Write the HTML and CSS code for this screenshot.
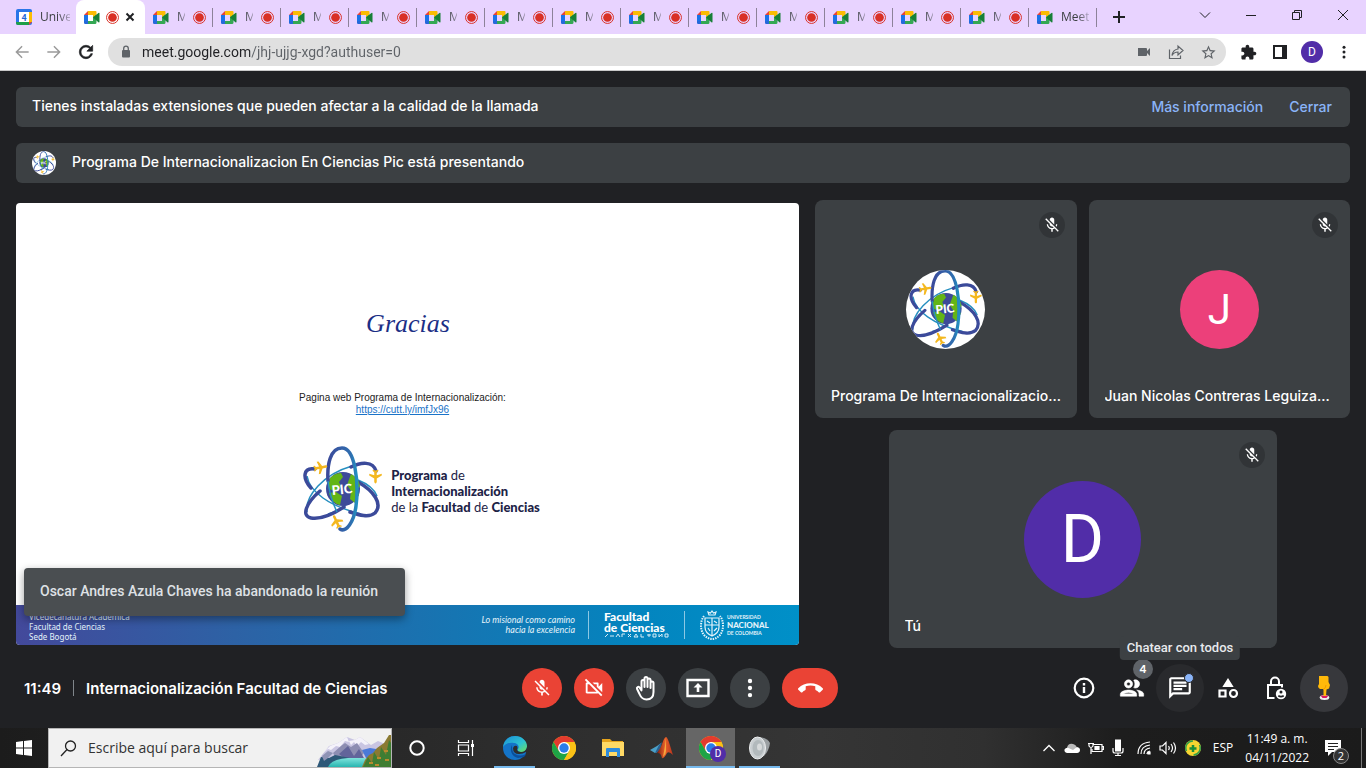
FILE: index.html
```html
<!DOCTYPE html>
<html lang="es">
<head>
<meta charset="utf-8">
<meta name="viewport" content="width=device-width, initial-scale=1">
<title>Meet: Internacionalización Facultad de Ciencias</title>
<link rel="stylesheet" href="styles.css">
</head>
<body>
<svg class="sprite" aria-hidden="true">
  <defs>
    <linearGradient id="orbit-v" x1="0" y1="0" x2="1" y2="0"><stop offset="0" stop-color="#3b4a9a"/><stop offset=".8" stop-color="#2f6fb0"/><stop offset="1" stop-color="#2390c0"/></linearGradient>
    <linearGradient id="edge-a" x1="0" y1="0" x2="1" y2="1"><stop offset="0" stop-color="#1b8fd8"/><stop offset=".6" stop-color="#2ec3d0"/><stop offset="1" stop-color="#6fe05a"/></linearGradient>
    <linearGradient id="water" x1="0" y1="0" x2="0" y2="1"><stop offset="0" stop-color="#7fe3dc"/><stop offset="1" stop-color="#28b5b0"/></linearGradient>
    <linearGradient id="matlab-r" x1="0" y1="0" x2="1" y2="0"><stop offset="0" stop-color="#7a1c10"/><stop offset=".5" stop-color="#e8622a"/><stop offset="1" stop-color="#b8321c"/></linearGradient>
  </defs>
  <symbol id="meet" viewBox="0 0 16 16"><path fill="#1a73e8" d="M0 6h4v6H0z"/><path fill="#ea4335" d="M0 6l4-4v4z"/><path fill="#fbbc04" d="M4 2h7.500q1 0 1 1v4.500L9 8.500V6H4z"/><path fill="#2668d9" d="M0 12h4v3H1.200Q0 15 0 13.700z"/><path fill="#34a853" d="M4 12h5V8l3.500-2.500V13.500q0 1.500-1.500 1.500H4z"/><path fill="#188038" d="M9 8.500l5.400-4.600q1.100-.7 1.100.5v8.300q0 1.200-1.100.5z"/></symbol>
  <symbol id="rec" viewBox="0 0 12 12"><circle cx="6" cy="6" r="5.500" fill="none" stroke="#d93025" stroke-width=".9"/><circle cx="6" cy="6" r="4" fill="#d93025"/></symbol>
  <symbol id="mic-off" viewBox="0 0 24 24"><path d="M19 11h-1.700c0 .74-.16 1.430-.43 2.050l1.230 1.230c.56-.98.9-2.090.9-3.280zm-4.020.17c0-.06.02-.11.02-.17V5c0-1.660-1.340-3-3-3S9 3.340 9 5v.18l5.980 5.990zM4.270 3L3 4.270l6.010 6.010V11c0 1.660 1.330 3 2.990 3 .22 0 .44-.03.65-.08l1.660 1.660c-.71.33-1.500.52-2.310.52-2.760 0-5.300-2.100-5.300-5.100H5c0 3.410 2.720 6.230 6 6.720V21h2v-3.280c.91-.13 1.770-.45 2.540-.9L19.730 21 21 19.730 4.270 3z"/></symbol>
  <symbol id="dots" viewBox="0 0 24 24"><circle cx="12" cy="5.500" r="2"/><circle cx="12" cy="12" r="2"/><circle cx="12" cy="18.500" r="2"/></symbol>
  <symbol id="plane" viewBox="0 0 24 24"><path fill="#f4b81f" d="M22 16.500v-3l-8-4.500V3.500C14 2.500 13 1 12 1s-2 1.500-2 2.500V9l-8 4.500v3l8-2.500V19l-2.500 2v2l4.500-1.300L16.500 23v-2L14 19v-5z"/></symbol>
  <symbol id="pic-logo" viewBox="0 0 80 87">
    <g fill="none">
      <path stroke="#258fc0" stroke-width="1.500" d="M49 20Q28 26 15 40T4 66M4 30Q6 42 20 52T58 68M74 50Q70 40 55 34M25 68Q35 66 45 57"/>
      <path stroke="#3b4a9a" stroke-width="3.500" stroke-linecap="round" d="M12 23C0 21-1 32 8 42M55 36C71 45 80 58 72 67 66 72 56 69 47 66M73 25C70 15 58 16 48 21M17 45C3 57-2 70 8 72 18 74 30 68 41 61"/>
    </g>
    <circle cx="40" cy="43" r="17" fill="#3d4a99"/>
    <path fill="#63b516" d="M25 35q5-8 13-8l2 4-4 5 2 5-7 4-5-2zM26 47l7-1 6 4-2 9q-9-2-11-12zM48 28q8 4 9 12l-4 5 3 3-4 9-5-4 1-8-4-6z"/>
    <text x="39" y="48" text-anchor="middle" transform="rotate(-6 39 44)" class="pic-word">PIC</text>
    <path fill="none" stroke="url(#orbit-v)" stroke-width="3.500" stroke-linecap="round" d="M37 83C43 87 51 76 53 60 56 36 52 2 39 2 27 2 24 19 25 35"/>
    <path fill="none" stroke="#258fc0" stroke-width="1.500" d="M25 35q2 17 9 31"/>
    <use href="#plane" x="10" y="14" width="15" height="15" transform="rotate(80 17.500 21.500)"/>
    <use href="#plane" x="65" y="23" width="15" height="15" transform="rotate(180 72.500 30.500)"/>
    <use href="#plane" x="26" y="68" width="15" height="15" transform="rotate(-25 33.500 75.500)"/>
  </symbol>
  <symbol id="chrome-logo" viewBox="0 0 24 24"><circle cx="12" cy="12" r="12" fill="#fbc116"/><path fill="#e33b2e" d="M1.600 6A12 12 0 0 1 22.400 6H12L6.800 15z"/><path fill="#1ea446" d="M1.600 6A12 12 0 0 0 12 24l5.200-9H6.800z"/><path fill="#fbc116" d="M12 24A12 12 0 0 0 22.400 6H12l5.200 9z"/><circle cx="12" cy="12" r="6" fill="#fff"/><circle cx="12" cy="12" r="4.700" fill="#2a7de9"/></symbol>
</svg>

<header class="tabstrip">
  <nav class="tabs" aria-label="Pestañas">
    <a class="tab tab-first" href="#"><svg class="fav" viewBox="0 0 16 16"><rect width="16" height="16" rx="2" fill="#2a75e8"/><path fill="#fbbc04" d="M13 3h3v10h-3z"/><path fill="#1e9e48" d="M0 13h13v3H2q-2 0-2-2z"/><path fill="#ea4335" d="M13 13h3l-3 3z"/><path fill="#fff" d="M3 3h10v10H3z"/><text x="8" y="11.500" text-anchor="middle" class="cal-num">4</text></svg><span class="tab-title">Universidad</span></a>
    <div class="tab active"><svg class="fav"><use href="#meet"/></svg><svg class="rec"><use href="#rec"/></svg><button class="tab-close" aria-label="Cerrar pestaña"><svg width="10" height="10" viewBox="0 0 10 10"><path d="M1.500 1.500l7 7m0-7l-7 7" stroke="#202124" stroke-width="2"/></svg></button></div>
    <a class="tab" href="#"><svg class="fav"><use href="#meet"/></svg><span class="tab-title">Meet</span><svg class="rec"><use href="#rec"/></svg></a>
    <a class="tab" href="#"><svg class="fav"><use href="#meet"/></svg><span class="tab-title">Meet</span><svg class="rec"><use href="#rec"/></svg></a>
    <a class="tab" href="#"><svg class="fav"><use href="#meet"/></svg><span class="tab-title">Meet</span><svg class="rec"><use href="#rec"/></svg></a>
    <a class="tab" href="#"><svg class="fav"><use href="#meet"/></svg><span class="tab-title">Meet</span><svg class="rec"><use href="#rec"/></svg></a>
    <a class="tab" href="#"><svg class="fav"><use href="#meet"/></svg><span class="tab-title">Meet</span><svg class="rec"><use href="#rec"/></svg></a>
    <a class="tab" href="#"><svg class="fav"><use href="#meet"/></svg><span class="tab-title">Meet</span><svg class="rec"><use href="#rec"/></svg></a>
    <a class="tab" href="#"><svg class="fav"><use href="#meet"/></svg><span class="tab-title">Meet</span><svg class="rec"><use href="#rec"/></svg></a>
    <a class="tab" href="#"><svg class="fav"><use href="#meet"/></svg><span class="tab-title">Meet</span><svg class="rec"><use href="#rec"/></svg></a>
    <a class="tab" href="#"><svg class="fav"><use href="#meet"/></svg><span class="tab-title">Meet</span><svg class="rec"><use href="#rec"/></svg></a>
    <a class="tab" href="#"><svg class="fav"><use href="#meet"/></svg><span class="tab-title">Meet</span><svg class="rec"><use href="#rec"/></svg></a>
    <a class="tab" href="#"><svg class="fav"><use href="#meet"/></svg><span class="tab-title">Meet</span><svg class="rec"><use href="#rec"/></svg></a>
    <a class="tab" href="#"><svg class="fav"><use href="#meet"/></svg><span class="tab-title">Meet</span><svg class="rec"><use href="#rec"/></svg></a>
    <a class="tab" href="#"><svg class="fav"><use href="#meet"/></svg><span class="tab-title">Meet</span><svg class="rec"><use href="#rec"/></svg></a>
    <a class="tab" href="#"><svg class="fav"><use href="#meet"/></svg><span class="tab-title">Meet</span></a>
  </nav>
  <button class="new-tab" aria-label="Nueva pestaña"><svg width="12" height="12" viewBox="0 0 12 12"><path d="M6 0v12M0 6h12" stroke="#202124" stroke-width="2"/></svg></button>
  <div class="window-controls">
    <button aria-label="Buscar pestañas"><svg width="12" height="12" viewBox="0 0 12 12"><path d="M1 3.500l5 5 5-5"/></svg></button>
    <button aria-label="Minimizar"><svg width="12" height="12" viewBox="0 0 12 12"><path d="M1 6.500h10"/></svg></button>
    <button aria-label="Restaurar"><svg width="12" height="12" viewBox="0 0 12 12"><path d="M1.500 3.500h7v7h-7zM3.500 3.500v-2h7v7h-2"/></svg></button>
    <button aria-label="Cerrar"><svg width="12" height="12" viewBox="0 0 12 12"><path d="M1 1l10 10m0-10L1 11"/></svg></button>
  </div>
</header>

<div class="toolbar">
  <button class="tool faded" aria-label="Atrás"><svg width="20" height="20" viewBox="0 0 24 24"><path d="M20 11H7.400l5.300-5.300L11.500 4.500 4 12l7.500 7.500 1.200-1.200L7.400 13H20z"/></svg></button>
  <button class="tool faded" aria-label="Adelante"><svg width="20" height="20" viewBox="0 0 24 24"><path d="M4 11h12.600l-5.300-5.300 1.200-1.200L20 12l-7.500 7.500-1.200-1.200 5.300-5.300H4z"/></svg></button>
  <button class="tool" aria-label="Recargar"><svg width="20" height="20" viewBox="0 0 24 24"><path stroke="#202124" stroke-width=".8" d="M17.650 6.350C16.200 4.900 14.210 4 12 4c-4.420 0-7.990 3.580-7.990 8s3.570 8 7.990 8c3.730 0 6.840-2.550 7.730-6h-2.080c-.82 2.330-3.040 4-5.650 4-3.310 0-6-2.690-6-6s2.690-6 6-6c1.660 0 3.140.69 4.220 1.780L13 11h7V4l-2.350 2.350z"/></svg></button>
  <form class="omnibox">
    <svg width="12" height="14" viewBox="0 0 12 14" fill="#5f6368"><path d="M3 5h6q1 0 1 1v5.500q0 1-1 1H3q-1 0-1-1V6q0-1 1-1z"/><path d="M3.700 5.500V3.500a2.300 2.300 0 0 1 4.600 0v2" fill="none" stroke="#5f6368" stroke-width="1.300"/></svg>
    <input class="url" type="text" aria-label="Dirección" value="meet.google.com/jhj-ujjg-xgd?authuser=0">
    <button type="button" class="tool grey" aria-label="Cámara"><svg width="14" height="12" viewBox="0 0 14 12"><path d="M1 2h8q1 0 1 1v2l3-3v8l-3-3v2q0 1-1 1H1z"/></svg></button>
    <button type="button" class="tool grey" aria-label="Compartir"><svg width="16" height="16" viewBox="0 0 16 16" fill="none" stroke="#5f6368"><path stroke-width="1.200" d="M1.500 5.500v9h11v-3M4 11.500q1-6 6-6.500V2l5 4.500-5 4.500V8Q6 8 4 11.500z"/></svg></button>
    <button type="button" class="tool grey" aria-label="Favorito"><svg width="17" height="17" viewBox="0 0 24 24"><path d="M22 9.240l-7.190-.62L12 2 9.190 8.630 2 9.240l5.460 4.730L5.820 21 12 17.270 18.180 21l-1.630-7.030L22 9.240zM12 15.400l-3.760 2.270 1-4.280-3.320-2.880 4.380-.38L12 6.100l1.710 4.040 4.380.38-3.320 2.880 1 4.280L12 15.400z"/></svg></button>
  </form>
  <button class="tool" aria-label="Extensiones"><svg width="17" height="17" viewBox="0 0 24 24"><path d="M20.500 11H19V7c0-1.100-.9-2-2-2h-4V3.500C13 2.120 11.880 1 10.500 1S8 2.120 8 3.500V5H4c-1.100 0-1.990.9-1.990 2v3.800H3.500c1.490 0 2.700 1.210 2.700 2.700s-1.210 2.700-2.700 2.700H2V20c0 1.100.9 2 2 2h3.800v-1.500c0-1.490 1.210-2.700 2.700-2.700 1.490 0 2.700 1.210 2.700 2.700V22H17c1.100 0 2-.9 2-2v-4h1.500c1.380 0 2.500-1.120 2.500-2.500S21.880 11 20.500 11z"/></svg></button>
  <button class="tool" aria-label="Panel lateral"><svg width="14" height="14" viewBox="0 0 14 14"><path fill-rule="evenodd" d="M0 0h14v14H0zM2 2v10h7V2z"/></svg></button>
  <button class="tool" aria-label="Perfil"><span class="profile">D</span></button>
  <button class="tool" aria-label="Menú"><svg width="18" height="18" viewBox="0 0 24 24"><use href="#dots"/></svg></button>
</div>

<main class="meet">
  <section class="notice">
    <span class="notice-text">Tienes instaladas extensiones que pueden afectar a la calidad de la llamada</span>
    <a href="#">Más información</a>
    <a href="#">Cerrar</a>
  </section>
  <section class="notice">
    <span class="presenter"><svg width="22" height="24"><use href="#pic-logo"/></svg></span>
    <span class="notice-text">Programa De Internacionalizacion En Ciencias Pic está presentando</span>
  </section>

  <div class="stage">
    <article class="slide">
      <div class="slide-body">
        <h1>Gracias</h1>
        <p class="slide-web">Pagina web Programa de Internacionalización:<br><a href="#">https://cutt.ly/imfJx96</a></p>
        <div class="brand">
          <svg width="80" height="87"><use href="#pic-logo"/></svg>
          <p><b>Programa</b> de<br><b>Internacionalización</b><br>de la <b>Facultad</b> de <b>Ciencias</b></p>
        </div>
      </div>
      <footer class="slide-foot">
        <p class="office">Vicedecanatura Académica<br>Facultad de Ciencias<br>Sede Bogotá</p>
        <p class="motto">Lo misional como camino<br>hacia la excelencia</p>
        <div class="faculty"><b>Facultad<br>de Ciencias</b><svg viewBox="0 0 66 5" width="66" height="5" fill="none" stroke="#d5ecf7"><path d="M1 4l3-3M6 3h4M12 4l2-3 2 3M18 4V1h3M24 1l3 3m0-3l-3 3M30 4l2-3 2 3zM37 1v3h3M43 2h4M45 1v3M49 1h3v3h-3zM55 1v3l3-3v3M61 1h3v3h-3z"/></svg></div>
        <div class="university">
          <svg width="24" height="30" viewBox="0 0 24 30" fill="none" stroke="#e4f3fa" stroke-width="1.200"><path d="M9 5l-1-3 2.500 1L12 1l1.500 2L16 2l-1 3zM5 8h14v9q0 6-7 9-7-3-7-9zM5 15h14M12 8v18M7 11l3 2M14 11l3 2M8 18l2 3M14 21l3-3"/><path stroke-dasharray="1.500 1" stroke-width="2" d="M4 6C0 11 0 20 4 25q4 4 8 4t8-4c4-5 4-14 0-19"/></svg>
          <p><span>UNIVERSIDAD</span><b>NACIONAL</b><span>DE COLOMBIA</span></p>
        </div>
      </footer>
      <div class="toast" role="status">Oscar Andres Azula Chaves ha abandonado la reunión</div>
    </article>

    <section class="tiles">
      <article class="tile">
        <span class="muted"><svg width="18" height="18"><use href="#mic-off"/></svg></span>
        <span class="avatar logo"><svg width="74" height="80"><use href="#pic-logo"/></svg></span>
        <span class="name">Programa De Internacionalizacion En Ciencias Pic</span>
      </article>
      <article class="tile">
        <span class="muted"><svg width="18" height="18"><use href="#mic-off"/></svg></span>
        <span class="avatar pink">J</span>
        <span class="name">Juan Nicolas Contreras Leguizamon</span>
      </article>
      <article class="tile wide">
        <span class="muted"><svg width="18" height="18"><use href="#mic-off"/></svg></span>
        <span class="avatar purple">D</span>
        <span class="name">Tú</span>
      </article>
    </section>
  </div>

  <footer class="controls">
    <div class="meeting"><time>11:49</time><span class="rule"></span><span>Internacionalización Facultad de Ciencias</span></div>
    <div class="call">
      <button class="round red" aria-label="Activar micrófono"><svg width="20" height="20"><use href="#mic-off"/></svg></button>
      <button class="round red" aria-label="Activar cámara"><svg width="22" height="22" viewBox="0 0 24 24"><path d="M9.560 8l-2-2-4.150-4.140L2 3.270 4.730 6H4c-.55 0-1 .45-1 1v10c0 .55.45 1 1 1h12c.21 0 .39-.08.55-.18L19.730 21l1.410-1.410-8.860-8.860L9.560 8zM5 16V8h1.730l8 8H5zm10-8v2.610l6 6V6.500l-4 4V7c0-.55-.45-1-1-1h-5.610l2 2H15z"/></svg></button>
      <button class="round" aria-label="Levantar la mano"><svg width="24" height="26" viewBox="0 0 24 26" fill="none" stroke="#fff" stroke-width="2" stroke-linecap="round" stroke-linejoin="round"><path d="M7.500 15V6.500a1.500 1.500 0 0 1 3 0V12M10.500 12V3.500a1.500 1.500 0 0 1 3 0V12M13.500 12V5a1.500 1.500 0 0 1 3 0v8M16.500 13V8a1.500 1.500 0 0 1 3 0v9c0 5-3 7.500-7 7.500-4.500 0-6-3-7-5.500L3 13.800c-.6-1.600 1.400-2.700 2.500-1.300l2 3"/></svg></button>
      <button class="round" aria-label="Presentar ahora"><svg width="24" height="20" viewBox="0 0 24 20"><path d="M1.500 2h21v16h-21z" fill="none" stroke="#fff" stroke-width="2.400"/><path d="M12 5l4.500 4.500H13.300V14h-2.600V9.500H7.500z"/></svg></button>
      <button class="round" aria-label="Más opciones"><svg width="26" height="26"><use href="#dots"/></svg></button>
      <button class="round red hangup" aria-label="Abandonar la llamada"><svg width="25" height="25" viewBox="0 0 24 24"><path d="M12 9c-1.600 0-3.150.25-4.600.72v3.100c0 .39-.23.74-.56.9-.98.49-1.870 1.120-2.660 1.850-.18.18-.43.28-.7.28-.28 0-.53-.11-.71-.29L.29 13.080c-.18-.17-.29-.42-.29-.7 0-.28.11-.53.29-.71C3.340 8.780 7.460 7 12 7s8.660 1.780 11.710 4.670c.18.18.29.43.29.71 0 .28-.11.53-.29.71l-2.480 2.480c-.18.18-.43.29-.71.29-.27 0-.52-.11-.7-.28-.79-.74-1.690-1.360-2.670-1.850-.33-.16-.56-.5-.56-.9v-3.100C15.150 9.250 13.600 9 12 9z"/></svg></button>
    </div>
    <div class="panels">
      <button aria-label="Detalles de la reunión"><svg width="24" height="24" viewBox="0 0 24 24"><circle cx="12" cy="12" r="9.300" fill="none" stroke="#fff" stroke-width="2.200"/><path d="M10.800 7h2.400v2.400h-2.400zM10.800 11h2.400v6h-2.400z"/></svg></button>
      <button aria-label="Mostrar a todos"><svg width="28" height="28" viewBox="0 0 24 24"><path stroke="#fff" stroke-width=".5" d="M9 13.750c-2.340 0-7 1.170-7 3.500V19h14v-1.750c0-2.330-4.660-3.500-7-3.500zM4.340 17c.84-.58 2.870-1.250 4.660-1.250s3.820.67 4.660 1.250H4.340zM9 12c1.930 0 3.500-1.570 3.500-3.500S10.930 5 9 5 5.500 6.570 5.500 8.500 7.070 12 9 12zm0-5c.83 0 1.500.67 1.500 1.500S9.830 10 9 10s-1.500-.67-1.500-1.500S8.170 7 9 7zm7.040 6.810c1.160.84 1.960 1.960 1.960 3.440V19h4v-1.750c0-2.020-3.500-3.170-5.960-3.440zM15 12c1.930 0 3.500-1.570 3.500-3.500S16.930 5 15 5c-.54 0-1.040.13-1.500.35.63.89 1 1.980 1 3.150s-.37 2.260-1 3.150c.46.22.96.35 1.500.35z"/></svg><span class="count">4</span></button>
      <button class="hovered" aria-label="Chatear con todos"><svg width="26" height="26" viewBox="0 0 24 24"><path d="M4 4h16v12H5.170L4 17.170V4m0-2c-1.100 0-1.990.9-1.990 2L2 22l4-4h14c1.100 0 2-.9 2-2V4c0-1.100-.9-2-2-2H4zm2 10h8v2H6v-2zm0-3h12v2H6V9zm0-3h12v2H6V6z"/></svg><span class="unread"></span><span class="tooltip" role="tooltip">Chatear con todos</span></button>
      <button aria-label="Actividades"><svg width="24" height="24" viewBox="0 0 24 24" fill="none" stroke="#fff" stroke-width="2.200"><path d="M12 4L8.300 10h7.400z" fill="#fff"/><path d="M3.500 14.500h6v6h-6z"/><circle cx="17.500" cy="17.500" r="3.500"/></svg></button>
      <button aria-label="Controles del organizador"><svg width="24" height="26" viewBox="0 0 24 26" fill="none" stroke="#fff" stroke-width="2"><path d="M10.500 23H4V10h14v2.500M7 10V6.500a4 4 0 0 1 8 0V10"/><circle cx="17" cy="19" r="5.200" fill="#fff" stroke="none"/><circle cx="17" cy="17" r="1.500" fill="#202124" stroke="none"/><path stroke="#202124" stroke-width="1.800" d="M14.300 20.800q2.700 1.500 5.400 0"/></svg></button>
      <button class="pointer" aria-label="Puntero"><svg width="24" height="28" viewBox="0 0 24 28"><ellipse cx="12.500" cy="23.500" rx="4.800" ry="2.500" fill="#eee"/><path fill="#d81b60" d="M8.500 21.500h8l-2 2.500h-4z"/><path fill="#ffb90a" d="M7 2h8.500l1 1v5l1.500 3-1 3.500-2.500 1-.5 6.500h-2.500v-7H8q-2-1-2-3l1-2z"/><path stroke="#f09a00" fill="none" d="M11 15.500q3-1 3-4.500"/></svg></button>
    </div>
  </footer>
</main>

<footer class="taskbar">
  <button class="start" aria-label="Inicio"><svg width="16" height="16" viewBox="0 0 16 16" fill="#fff"><path d="M0 2l7-1v6.500H0zM8 .900L16 0v7.500H8zM0 8.500h7V15l-7-1zM8 8.500h8V16l-8-.9z"/></svg></button>
  <label class="search">
    <svg class="lens" width="17" height="17" viewBox="0 0 17 17" fill="none" stroke="#222" stroke-width="1.300"><circle cx="10.500" cy="6" r="5"/><path d="M7 9.500L1 16"/></svg>
    <input type="search" placeholder="Escribe aquí para buscar" aria-label="Buscar en Windows">
    <svg class="scene" width="74" height="36" viewBox="0 -6 74 36"><path fill="#c9c5e2" d="M1 23L12 9l9-3 9-6 8 3 5-3 11 8 7-4 12 5v12H14z"/><path fill="#f4f2fa" d="M5 17l8-8 8-3 9-6 2 5-4-1-5 6-4-1-5 4-3-1zM32 4l6-1 5-3 9 7-4 1-4-3-4 4-3-4-3 3z"/><path fill="#8d8db2" d="M16 16l8-7 4-3 6 4 6-4 7 10-6 7H20z"/><path fill="#62649a" d="M22 17l9-8 6 10 5-7 6 11H30z"/><path fill="#4a79d8" d="M45 13l8-2 6 1 13-4v13H49z"/><path fill="#2d5878" d="M0 30l4-10 8 1 6-3 10 2 14 3h30v13H0z"/><path fill="#8f93b5" d="M5 19l6-5 5 2-5 5-4 3z"/><path fill="url(#water)" d="M11 30q3-8 20-9l26 0-6 9z"/><path fill="#8a7a32" d="M45 30l3-7 4-5 4-2 4-5 7-5 5-8h2v37z"/><path fill="#3f7d32" d="M46 30l5-10 4 6 2-11 5 8 2-13 5 8 3-15 2 3v24z"/><path fill="#b98a2d" d="M52 25h4v2h-4zM60 20h4v2h-4zM67 13h4v2h-4zM58 27h4v2h-4zM68 22h4v2h-4z"/></svg>
  </label>
  <nav class="apps" aria-label="Aplicaciones">
    <button aria-label="Cortana"><svg width="18" height="18" viewBox="0 0 18 18"><circle cx="9" cy="9" r="6.700" fill="none" stroke="#fff" stroke-width="2"/></svg></button>
    <button aria-label="Vista de tareas"><svg width="18" height="16" viewBox="0 0 18 16" fill="none" stroke="#fff" stroke-width="1.200"><path d="M1.500 0v2.500h10V0M1.500 5h10v6h-10zM1.500 16v-2.500h10V16M15.500 0v16"/><path fill="#fff" stroke="none" d="M14 4h3v3h-3z"/></svg></button>
    <button class="open" aria-label="Edge"><svg width="24" height="24" viewBox="0 0 24 24"><circle cx="12" cy="12" r="12" fill="#1474c8"/><path fill="url(#edge-a)" d="M0 11C1 4 6 0 12 0c7 0 12 5 12 10 0 4-3 6-6 6-2 0-4-1-3-3 2-3-1-6-4-6C6 6 2 8 0 11z"/><path fill="#0c4f9a" d="M9 9c-3 5 0 12 6 13l6-1q2-2 2-3-6 3-11 0c-3-2-3-6-3-9z"/><path fill="#2d2d2d" d="M14 14q1-2 0-4-3-1-4 2 0 6 6 6 4 0 7-2l1 1v-6q-1 5-6 5-3 0-4-2z"/></svg></button>
    <button aria-label="Chrome"><svg width="24" height="24"><use href="#chrome-logo"/></svg></button>
    <button aria-label="Explorador"><svg width="22" height="20" viewBox="0 0 22 20"><path fill="#e6a41c" d="M0 1h8l2 2h11v5H0z"/><path fill="#ffd965" d="M0 4h22v14H0z"/><path fill="#2e8bdc" d="M4 11q0-1 1-1h12q1 0 1 1v8h-3v-5H7v5H4z"/></svg></button>
    <button aria-label="MATLAB"><svg width="24" height="22" viewBox="0 0 24 22"><path fill="#4aa0c8" d="M0 13l7-4 4-3-3 9-3 1z"/><path fill="#2a5f8e" d="M5 16l4-8 3-3-2 9z"/><path fill="url(#matlab-r)" d="M9 13C12 10 13 1 16 0c2 0 5 12 7 18q-4-4-6-2-3 6-5 5c-1-4-2-5-5-5z"/><path fill="#f8a83c" d="M16 1q-1 9-3 19 3-3 3-6z"/></svg></button>
    <button class="open current" aria-label="Chrome, perfil D"><svg width="24" height="24"><use href="#chrome-logo"/></svg><span class="mini">D</span></button>
    <button class="open" aria-label="Sonido"><svg width="22" height="24" viewBox="0 0 22 24"><path fill="#9a9fa2" d="M8 1q10 0 13 6-1 8-6 13l-7 3z"/><ellipse cx="8.500" cy="12" rx="8" ry="11" fill="#c9ced1" stroke="#eceeef"/><ellipse cx="9" cy="12" rx="5.500" ry="8" fill="#b2b9bc"/><ellipse cx="10.500" cy="11" rx="2.500" ry="3.500" fill="#d7dadb"/></svg></button>
  </nav>
  <div class="tray">
    <svg width="14" height="10" viewBox="0 0 14 10" fill="none" stroke="#fff" stroke-width="1.300"><path d="M1.500 8L7 2.500 12.500 8"/></svg>
    <svg width="16" height="12" viewBox="0 0 16 12"><path fill="#bbb" d="M3 6q1-5 6-4 4 1 4 5l-5 3H2z"/><path fill="#fff" d="M3 11q-3-1-2.500-3.500Q2 5 4.500 6L9 8l4-3q3 .5 3 3t-3 3z"/></svg>
    <svg width="16" height="14" viewBox="0 0 16 14" fill="none" stroke="#fff" stroke-width="1.200"><path d="M5 3.500h9v7H4V8M14 5.500h1.500v3H14"/><path d="M1 2v3q2 3 4 0V2M3 7v6M0 2.500h6"/><path fill="#fff" d="M7 5.500h4v3H7z"/></svg>
    <svg width="12" height="18" viewBox="0 0 12 18" fill="none" stroke="#fff"><rect x="3.500" y="1" width="5" height="11" fill="#fff"/><path stroke-width="1.200" d="M1 9v3q0 2 2 2h6q2 0 2-2V9M6 14v2.500M3 16.500h6"/></svg>
    <svg class="wifi" width="14" height="14" viewBox="0 0 14 14" fill="none" stroke="#fff" stroke-width="1.200"><path d="M1 13Q1 2 13 1M4 13q0-8 9-9M7 13q0-5 6-6M10 13q0-2 3-3"/><path fill="#fff" d="M11 11h2v2h-2z"/></svg>
    <svg width="18" height="14" viewBox="0 0 18 14" fill="none" stroke="#fff" stroke-width="1.200"><path d="M1 5h2.500L7 1.500v11L3.500 9H1zM9.500 5q1.500 2 0 4M12 3q3 4 0 8M14.500 1.500q4 5.500 0 11"/></svg>
    <svg width="16" height="16" viewBox="0 0 16 16"><circle cx="8" cy="8" r="8" fill="#f6d531"/><path fill="none" stroke="#2fa04a" stroke-width="1.500" d="M1.500 11A7 7 0 0 1 8 1M14.500 5a7 7 0 0 1-6 10"/><path stroke="#1a8d3a" stroke-width="2.500" d="M8 5v7M4.500 8.500h7"/></svg>
    <span class="lang">ESP</span>
    <time class="clock">11:49 a. m.<br>04/11/2022</time>
    <button class="alerts" aria-label="Notificaciones"><svg width="16" height="16" viewBox="0 0 16 16"><path fill="#fff" d="M0 0h16v12H7l-4 4v-4H0z"/><path stroke="#222" stroke-width="1.200" d="M3 3.500h10M3 6.500h10M3 9.500h6"/></svg><span class="alert-count">2</span></button>
  </div>
</footer>
</body>
</html>
```
FILE: styles.css
```css
* { box-sizing: border-box; }
body {
  margin: 0;
  height: 100vh;
  display: flex;
  flex-direction: column;
  overflow: hidden;
  background: #202124;
  font-family: Inter, "Open Sans", sans-serif;
}
button { border: 0; padding: 0; background: none; font: inherit; color: inherit; display: flex; align-items: center; justify-content: center; }
p, h1 { margin: 0; }
a { text-decoration: none; }
svg { flex: none; }
.sprite { position: absolute; width: 0; height: 0; }
.pic-word { font: 900 13px Lato, sans-serif; fill: #fff; }
.cal-num { font: 700 9px Roboto, sans-serif; fill: #1a66d6; }

/* Tab strip */
.tabstrip { flex: none; height: 34px; display: flex; background: #e8d3ff; padding-left: 8px; }
.tabs { display: flex; min-width: 0; }
.tab { flex: 0 1 68px; min-width: 0; display: flex; align-items: center; gap: 8px; padding: 0 8px; position: relative; color: #3c4043; font: 12px/20px "Open Sans", sans-serif; }
.tab::after { content: ""; position: absolute; right: 0; top: 8px; width: 1px; height: 19px; background: #8d8299; }
.tab-first::after, .active::after { display: none; }
.active { flex: none; width: 69px; gap: 6px; background: #fff; border-radius: 8px 8px 0 0; }
.fav { width: 16px; height: 16px; }
.rec { width: 13px; height: 13px; }
.tab-title { flex: 1; min-width: 0; overflow: hidden; white-space: nowrap; -webkit-mask-image: linear-gradient(90deg, #000 calc(100% - 12px), #0004); mask-image: linear-gradient(90deg, #000 calc(100% - 12px), #0004); }
.tab:has(.rec) .tab-title { -webkit-mask-image: linear-gradient(90deg, #000, #0006); mask-image: linear-gradient(90deg, #000, #0006); }
.tab:has(.tab-title + .rec) { padding-right: 7px; }
.tab-first { padding-right: 6px; }
.new-tab { width: 44px; height: 34px; flex: none; }
.window-controls { margin-left: auto; display: flex; height: 29px; }
.window-controls button { width: 46px; }
.window-controls svg { fill: none; stroke: #202124; }

/* Address bar */
.toolbar { flex: none; height: 37px; display: flex; align-items: center; background: #fff; padding: 0 6px; border-bottom: 1px solid #c9c9c9; }
.tool { flex: none; width: 32px; height: 28px; fill: #202124; }
.faded { fill: #9a9a9a; }
.grey { fill: #5f6368; }
.omnibox { flex: 1; min-width: 0; height: 28px; margin: 0 6px; padding: 0 2px 0 12px; display: flex; align-items: center; background: #e0e0e0; border-radius: 14px; }
.url { flex: 1; min-width: 0; border: 0; outline: 0; margin-left: 10px; padding: 0; font: 14px/20px Roboto, sans-serif; color: transparent; background: linear-gradient(90deg, #202124 108px, #5f6368 108px); -webkit-background-clip: text; background-clip: text; }
.profile { width: 22px; height: 22px; border-radius: 50%; background: #512da8; color: #fff; font: 12px/22px Roboto, sans-serif; }

/* Meeting */
.meet { flex: 1; min-height: 0; display: flex; flex-direction: column; gap: 16px; padding: 16px 16px 0; color: #fff; }
.notice { flex: none; height: 40px; display: flex; align-items: center; gap: 16px; padding: 0 16px; background: #3c4043; border-radius: 6px; font-size: 14px; font-weight: 500; line-height: 20px; }
.notice-text { flex: 1; padding-bottom: 2px; }
.notice a { color: #8ab4f8; padding: 0 2px 0 8px; }
.presenter { width: 24px; height: 24px; border-radius: 50%; background: #fff; overflow: hidden; display: flex; align-items: center; justify-content: center; }
.stage { flex: 1; min-height: 0; display: grid; grid-template-columns: 783fr 535fr; gap: 16px; align-items: center; }
.slide { position: relative; aspect-ratio: 783 / 442; display: flex; flex-direction: column; background: #fff; border-radius: 4px; color: #222; }
.slide-body { flex: 1; display: flex; flex-direction: column; align-items: center; padding: 105px 10px 0 0; }
.slide h1 { padding-left: 11px; font: italic 26px/32px "Liberation Serif", serif; color: #1c2f86; }
.slide-web { margin-top: 52px; font: 10px/12px "Liberation Sans", sans-serif; text-align: center; }
.slide-web a { color: #1a73c8; text-decoration: underline; }
.brand { margin-top: 30px; padding-left: 38px; display: flex; align-items: center; gap: 8px; font: 13px/16px Lato, sans-serif; color: #1d2347; }
.brand p { padding-top: 3px; }
.brand b { font-weight: 900; }
.slide-foot { flex: none; height: 40px; display: flex; align-items: center; justify-content: flex-end; padding: 0 28px 0 13px; border-radius: 0 0 4px 4px; background: linear-gradient(90deg, #43499b, #2d62a5 28%, #1675b2 56%, #0385bf 80%, #0090c8); color: #e4f3fa; }
.office { margin-right: auto; padding-top: 5px; font: 8px/10px "Noto Sans", sans-serif; }
.motto { padding-right: 13px; font: italic 9px/10px Lato, sans-serif; text-align: right; }
.faculty { height: 28px; padding: 0 14px 0 15px; border: solid #8cc8e4; border-width: 0 1px; font: 900 12px/11px Lato, sans-serif; color: #fff; }
.faculty b, .faculty svg { display: block; font-weight: 900; }
.university { display: flex; align-items: center; gap: 3px; padding-left: 15px; }
.university p { width: 44px; display: flex; flex-direction: column; font: 700 8px/10px Lato, sans-serif; }
.university span { font-size: 5px; line-height: 6px; }
.toast { position: absolute; left: 8px; bottom: 29px; width: 381px; max-width: calc(100% - 16px); padding: 13px 16px 15px; border-radius: 4px; background: #4a4e51; box-shadow: 0 3px 8px #0006; color: #dfe1e5; font: 500 14px/20px Roboto, sans-serif; }

.tiles { height: 100%; display: flex; flex-wrap: wrap; justify-content: center; gap: 12px; padding-top: 1px; }
.tile { position: relative; flex: none; width: calc(50% - 6px); height: calc(50% - 6px); background: #3c4043; border-radius: 8px; display: flex; align-items: center; justify-content: center; }
.wide { width: 388px; max-width: 100%; }
.muted { position: absolute; top: 12px; right: 12px; width: 26px; height: 26px; border-radius: 50%; background: #313437; fill: #fff; display: flex; align-items: center; justify-content: center; }
.name { position: absolute; left: 16px; right: 12px; bottom: 12px; overflow: hidden; white-space: nowrap; text-overflow: ellipsis; font-size: 14px; font-weight: 500; line-height: 20px; }
.avatar { width: 79px; height: 79px; border-radius: 50%; overflow: hidden; display: flex; align-items: center; justify-content: center; padding-top: 2px; font: 42px/1 Roboto, sans-serif; }
.logo { background: #fff; padding: 0; }
.pink { background: #ec407a; }
.purple { width: 117px; height: 117px; background: #512da8; font-size: 66px; }

/* Call controls */
.controls { flex: none; height: 80px; margin: -16px 2px 0 8px; display: grid; grid-template-columns: 1fr auto 1fr; align-items: center; }
.meeting { display: flex; align-items: center; gap: 12px; font-size: 15px; font-weight: 600; white-space: nowrap; }
.rule { width: 1px; height: 16px; background: #80868b; }
.call { display: flex; gap: 12px; margin-right: 12px; }
.round { width: 40px; height: 40px; border-radius: 20px; background: #3c4043; fill: #fff; }
.red { background: #ea4335; }
.hangup { width: 56px; }
.panels { display: flex; justify-content: flex-end; fill: #fff; }
.panels button { position: relative; width: 48px; height: 48px; border-radius: 50%; }
.panels .hovered { background: #292a2d; }
.panels .pointer { background: #37383c; }
.count { position: absolute; top: -5px; right: 3px; width: 20px; height: 20px; border-radius: 50%; background: #5f6368; font-size: 11px; font-weight: 600; line-height: 20px; }
.unread { position: absolute; top: 9px; right: 10px; width: 10px; height: 10px; border-radius: 50%; background: #8ab4f8; border: 1px solid #292a2d; }
.tooltip { position: absolute; bottom: 52px; left: 50%; translate: -50%; padding: 4px 7px; border-radius: 4px; background: #3c4043; color: #e8eaed; font: 500 13px/16px Roboto, sans-serif; white-space: nowrap; }

/* Taskbar */
.taskbar { flex: none; height: 40px; display: flex; background: linear-gradient(90deg, #1c1c1c, #2d2d2d 38%, #353535 60%, #303030 72%, #1d1d1d 82%, #1b1b1b); color: #fff; font: 12px/18px "Open Sans", sans-serif; }
.start { width: 48px; }
.search { width: 344px; display: flex; align-items: center; background: #f1f1f1; border: 1px solid #b5b5b5; }
.lens { margin: 0 0 0 11px; }
.search input { flex: 1; min-width: 0; border: 0; outline: 0; background: none; padding: 0 0 0 11px; font: 14px/20px "Open Sans", sans-serif; }
.search input::placeholder { color: #333; opacity: 1; }
.scene { align-self: flex-end; }
.apps { display: flex; }
.apps button { width: 49px; position: relative; }
.apps .open::after { content: ""; position: absolute; left: 4px; right: 4px; bottom: 0; height: 2px; background: #76b9ed; }
.apps .current { background: #666; }
.apps .current::after { left: 0; right: 0; }
.mini { position: absolute; right: 9px; bottom: 6px; width: 16px; height: 16px; border-radius: 50%; background: #512da8; font: 10px/16px Roboto, sans-serif; }
.tray { margin-left: auto; margin-right: 4px; padding-right: 20px; border-right: 1px solid #777; display: flex; align-items: center; gap: 8px; }
.wifi { margin-left: 5px; }
.lang { margin-left: 4px; }
.clock { margin: 0 8px 0 4px; text-align: center; line-height: 19px; }
.alerts { position: relative; }
.alert-count { position: absolute; right: -8px; top: 8px; width: 16px; height: 16px; border-radius: 50%; background: #333; border: 1px solid #888; font: 11px/14px "Open Sans", sans-serif; }
```
